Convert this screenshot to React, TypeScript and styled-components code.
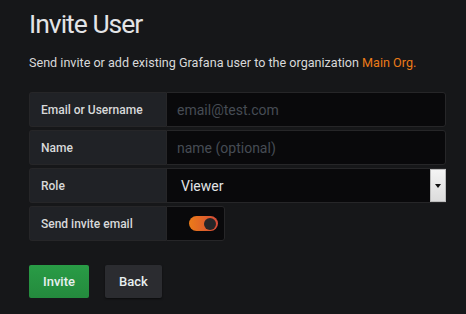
import React from 'react'
import styled, { createGlobalStyle } from 'styled-components'

const GlobalStyle = createGlobalStyle`
  html, body {
    margin: 0;
    padding: 0;
    background: #161719;
  }
  body {
    font-family: Roboto, "Liberation Sans", sans-serif;
    color: #d8d9da;
  }
`

const Page = styled.div`
  width: 466px;
  height: 314px;
  box-sizing: border-box;
  padding: 6px 20px 0 29px;
  overflow: hidden;
  background: #161719;
`

const Title = styled.h1`
  margin: 0;
  font-size: 26.5px;
  font-weight: 400;
  line-height: 36px;
  color: #e3e4e6;
  letter-spacing: -1px;
`

const Subtitle = styled.p`
  margin: 12px 0 0;
  font-size: 12.6px;
  line-height: 18px;
  color: #d8d9da;
`

const OrgLink = styled.span`
  color: #eb7b18;
`

const Form = styled.div`
  margin-top: 20px;
  display: flex;
  flex-direction: column;
  gap: 3px;
`

const Row = styled.div`
  display: flex;
  height: 35px;
`

const Label = styled.div`
  width: 137px;
  box-sizing: border-box;
  padding-left: 11px;
  display: flex;
  align-items: center;
  background: #202226;
  border: 1px solid #262628;
  border-right: none;
  border-radius: 3px 0 0 3px;
  font-size: 12px;
  font-weight: 500;
  color: #d8d9da;
`

const Input = styled.input`
  width: 280px;
  box-sizing: border-box;
  height: 35px;
  background: #09090b;
  border: 1px solid #262628;
  border-radius: 0 3px 3px 0;
  padding: 0 10px;
  font-family: Roboto, "Liberation Sans", sans-serif;
  font-size: 14px;
  color: #d8d9da;
  outline: none;
  &::placeholder {
    color: #464c54;
  }
`

const SelectBox = styled.div`
  width: 280px;
  box-sizing: border-box;
  height: 35px;
  display: flex;
  align-items: stretch;
  background: #09090b;
  border: 1px solid #262628;
  border-right: none;
`

const SelectValue = styled.div`
  flex: 1;
  display: flex;
  align-items: center;
  padding-left: 14px;
  font-size: 14px;
  color: #e3e4e6;
`

const SelectArrow = styled.div`
  width: 16px;
  display: flex;
  align-items: center;
  justify-content: center;
  background: linear-gradient(#f4f4f4, #dcdcdc);
  border: 1px solid #bcbcbc;
  box-sizing: border-box;
  &::after {
    content: '';
    border-left: 3px solid transparent;
    border-right: 3px solid transparent;
    border-top: 4px solid #111;
  }
`

const SwitchBox = styled.div`
  width: 59px;
  box-sizing: border-box;
  display: flex;
  align-items: center;
  padding-left: 22px;
  background: #09090b;
  border: 1px solid #262628;
  border-radius: 0 3px 3px 0;
`

const Toggle = styled.div<{ on: boolean }>`
  position: relative;
  width: 29px;
  height: 15px;
  border-radius: 8px;
  background: ${(p) => (p.on ? 'linear-gradient(90deg, #eb7b18, #d44a3a)' : '#333')};
  &::after {
    content: '';
    position: absolute;
    top: 1.5px;
    left: ${(p) => (p.on ? '15px' : '2px')};
    width: 12px;
    height: 12px;
    border-radius: 50%;
    background: #262628;
  }
`

const Buttons = styled.div`
  margin-top: 24px;
  display: flex;
  gap: 16px;
`

const Button = styled.button<{ variant: 'primary' | 'secondary' }>`
  height: 33px;
  padding: 0 14px;
  border: none;
  border-radius: 2px;
  font-family: Roboto, "Liberation Sans", sans-serif;
  font-size: 13px;
  font-weight: 500;
  color: #e8f0f0;
  background: ${(p) =>
    p.variant === 'primary'
      ? 'linear-gradient(#299c46, #248a3d)'
      : '#2b2c30'};
  box-shadow: ${(p) => (p.variant === 'secondary' ? '0 1px 2px rgba(0,0,0,0.5)' : 'none')};
`

const App = () => {
  return (
    <Page>
      <GlobalStyle />
      <Title>Invite User</Title>
      <Subtitle>
        Send invite or add existing Grafana user to the organization <OrgLink>Main Org.</OrgLink>
      </Subtitle>
      <Form>
        <Row>
          <Label>Email or Username</Label>
          <Input placeholder="email@test.com" />
        </Row>
        <Row>
          <Label>Name</Label>
          <Input placeholder="name (optional)" />
        </Row>
        <Row>
          <Label>Role</Label>
          <SelectBox>
            <SelectValue>Viewer</SelectValue>
            <SelectArrow />
          </SelectBox>
        </Row>
        <Row>
          <Label>Send invite email</Label>
          <SwitchBox>
            <Toggle on={true} />
          </SwitchBox>
        </Row>
      </Form>
      <Buttons>
        <Button variant="primary">Invite</Button>
        <Button variant="secondary">Back</Button>
      </Buttons>
    </Page>
  )
}

export default App
